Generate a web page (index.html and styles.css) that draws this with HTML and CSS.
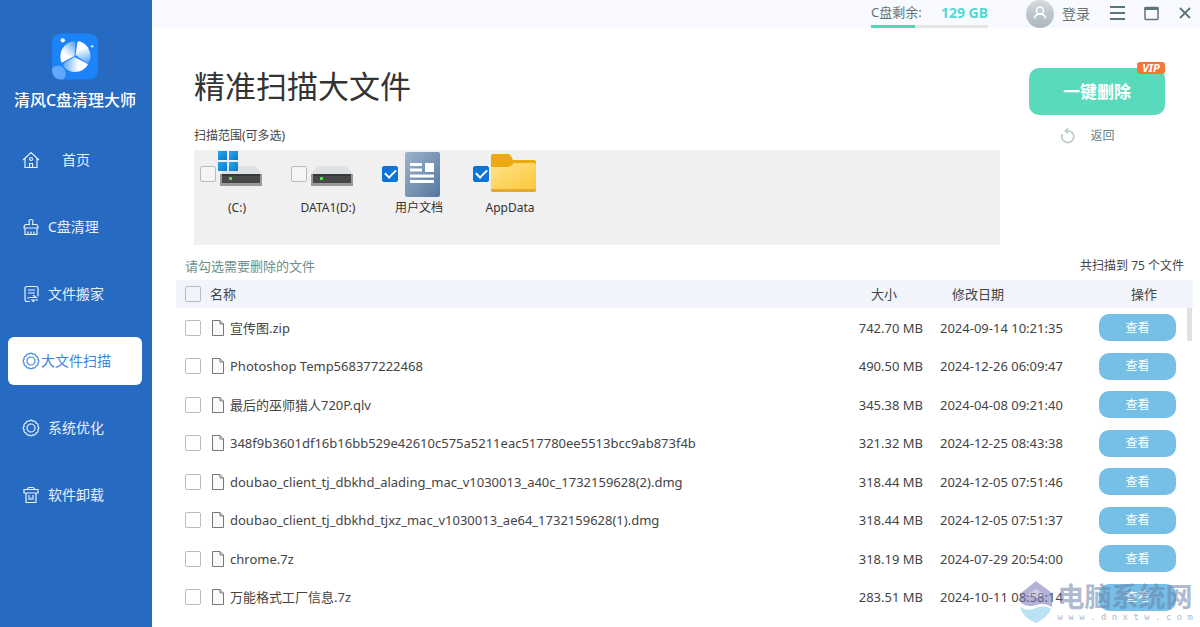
FILE: index.html
```html
<!DOCTYPE html>
<html lang="zh-CN">
<head>
<meta charset="utf-8">
<title>清风C盘清理大师</title>
<link rel="stylesheet" href="styles.css">
</head>
<body>
<svg class="defs" width="0" height="0" aria-hidden="true">
  <defs>
    <linearGradient id="blade" gradientUnits="userSpaceOnUse" x1="10" y1="26" x2="24" y2="10"><stop offset="0.3" stop-color="#fff"/><stop offset="1" stop-color="#5ba6fb"/></linearGradient>
    <linearGradient id="blade2" gradientUnits="userSpaceOnUse" x1="28" y1="9" x2="35" y2="30"><stop offset="0.3" stop-color="#fff"/><stop offset="1" stop-color="#5ba6fb"/></linearGradient>
    <linearGradient id="blade3" gradientUnits="userSpaceOnUse" x1="34" y1="33" x2="11" y2="31"><stop offset="0.3" stop-color="#fff"/><stop offset="1" stop-color="#5ba6fb"/></linearGradient>
    <linearGradient id="avatar" x1="0" y1="0" x2="0" y2="1"><stop offset="0" stop-color="#d5dadd"/><stop offset="1" stop-color="#aab6be"/></linearGradient>
    <linearGradient id="win" x1="0" y1="0" x2="1" y2="1"><stop offset="0" stop-color="#28a8ea"/><stop offset="1" stop-color="#0a78d0"/></linearGradient>
    <linearGradient id="doc" x1="0" y1="0" x2="1" y2="1"><stop offset="0" stop-color="#9db4cb"/><stop offset="1" stop-color="#55779e"/></linearGradient>
    <linearGradient id="folder" x1="0" y1="0" x2="1" y2="1"><stop offset="0" stop-color="#ffe38a"/><stop offset="1" stop-color="#fbc637"/></linearGradient>
    <symbol id="gear" viewBox="0 0 18 18">
      <path d="M7.200 2.200Q9 .2 10.800 2.200Q13.400 1.400 14 4.100Q16.700 4.700 15.900 7.300Q17.800 9 15.900 10.800Q16.700 13.400 14 14Q13.400 16.700 10.800 15.900Q9 17.800 7.200 15.900Q4.600 16.700 4 14Q1.300 13.400 2.100 10.800Q.2 9 2.100 7.300Q1.300 4.700 4 4.100Q4.600 1.400 7.200 2.200z"/>
      <circle cx="9" cy="9" r="4"/>
    </symbol>
    <symbol id="file" viewBox="0 0 12 16"><path d="M.5.500h7.500l3.500 3.500v11.500H.5z" fill="#fafafa" stroke="#777"/><path d="M8 .5V4h3.500" fill="none" stroke="#777"/></symbol>
    <symbol id="drive" viewBox="0 0 42 20">
      <path d="M7 0h28l7 8H0z" fill="#dfe2e4"/>
      <rect y="8" width="42" height="12" fill="#999"/><rect x="2" y="8" width="38" height="9" fill="#484848"/><rect x="2" y="8" width="38" height="2" fill="#383838"/>
      <rect x="9" y="11" width="3" height="3" fill="#4fe04f"/>
    </symbol>
  </defs>
</svg>
<div class="app">
  <aside class="sidebar">
    <div class="brand">
      <svg width="46" height="47" viewBox="0 0 47 47" aria-hidden="true">
        <defs><clipPath id="logo-clip"><rect width="47" height="47" rx="9"/></clipPath></defs>
        <rect width="47" height="47" rx="9" fill="#1c84f8"/>
        <circle cx="6" cy="41" r="8" fill="#60a9fb" clip-path="url(#logo-clip)"/>
        <path d="M23 23L10 30A15.500 15.500 0 0 1 22 8q2 0 2 2z" fill="url(#blade)"/>
        <path d="M24 22L26 9q0-1 2-1A15.500 15.500 0 0 1 38 29q-1 2-3 1z" fill="url(#blade2)"/>
        <path d="M23 24L36 31q1 1 0 2A15.500 15.500 0 0 1 12 34q-1-3 1-4z" fill="url(#blade3)"/>
        <circle cx="11" cy="7" r="2.200" fill="#fff"/><circle cx="41" cy="13" r="1.300" fill="#d5e9ff"/>
      </svg>
      <span class="brand-name">清风C盘清理大师</span>
    </div>
    <nav class="nav">
      <a class="nav-item nav-home" href="#"><svg class="nav-icon" viewBox="0 0 18 18"><path d="M1 9L9 1.500 17 9M3 7.500V16.500h12V7.500M7.500 16.500v-4h3v4"/><circle cx="9" cy="8" r="1.500"/></svg><span>首页</span></a>
      <a class="nav-item" href="#"><svg class="nav-icon" viewBox="0 0 18 18"><path d="M7.500 6.500L7 3.500q0-2 2-2t2 2l-.5 3h3.500q2 0 2 3.500H2q0-3.500 2-3.500zM3 10v6.500h12V10M6 16.500v-3M9 16.500v-3M12 16.500v-3"/></svg><span>C盘清理</span></a>
      <a class="nav-item" href="#"><svg class="nav-icon" viewBox="0 0 18 18"><path d="M8 16.500H5q-2 0-2-2v-11q0-2 2-2h9q2 0 2 2v8M6 5h7M6 8h7M5 13h2M7 12.500h7l-3-2.500M16 15h-6l2 2"/></svg><span>文件搬家</span></a>
      <a class="nav-item active" href="#" aria-current="page"><svg class="nav-icon"><use href="#gear"/></svg><span>大文件扫描</span></a>
      <a class="nav-item" href="#"><svg class="nav-icon"><use href="#gear"/></svg><span>系统优化</span></a>
      <a class="nav-item" href="#"><svg class="nav-icon" viewBox="0 0 18 18"><path d="M5.500 3.500q0-2 2-2h3q2 0 2 2M2 3.500h14V7H2zM4 7v9.500h10V7M7 9v5M9 11.500v2.500M11 9v5"/></svg><span>软件卸载</span></a>
    </nav>
  </aside>

  <main class="main">
    <header class="topbar">
      <div class="disk">
        <div class="disk-text"><span>C盘剩余:</span><strong>129 GB</strong></div>
        <div class="disk-track"><div class="disk-fill"></div></div>
      </div>
      <button class="login" type="button">
        <svg width="28" height="28" viewBox="0 0 28 28" aria-hidden="true"><circle cx="14" cy="14" r="14" fill="url(#avatar)"/><g fill="none" stroke="#fff" stroke-width="1.500"><circle cx="14" cy="10.500" r="3.500"/><path d="M8.500 18.500c.5-6 10.500-6 11 0"/></g></svg>
        <span>登录</span>
      </button>
      <div class="window-tools">
        <button class="tool" type="button" aria-label="菜单"><svg width="16" height="16" viewBox="0 0 16 16"><path d="M1 1h15M1 7h15M1 13h15" stroke-width="2"/></svg></button>
        <button class="tool" type="button" aria-label="最大化"><svg width="16" height="16" viewBox="0 0 16 16"><rect x="2" y="1.500" width="13" height="12" rx="1"/><path d="M1.500 2.500h14" stroke-width="3"/></svg></button>
        <button class="tool" type="button" aria-label="关闭"><svg width="16" height="16" viewBox="0 0 16 16"><path d="M3 2l10 10M13 2L3 12" stroke-width="1.800"/></svg></button>
      </div>
    </header>

    <section class="intro">
      <div class="scope">
        <h1>精准扫描大文件</h1>
        <p class="scope-label">扫描范围(可多选)</p>
        <div class="scope-panel">
          <label class="place">
            <span class="place-top"><input class="check" type="checkbox">
              <svg width="48" height="46" viewBox="0 0 48 46"><use href="#drive" x="2" y="15" width="42" height="20"/><g fill="url(#win)"><rect width="9" height="9"/><rect x="11" width="9" height="9"/><rect y="11" width="9" height="9"/><rect x="11" y="11" width="9" height="9"/></g></svg></span>
            <span>(C:)</span>
          </label>
          <label class="place">
            <span class="place-top"><input class="check" type="checkbox">
              <svg width="48" height="46" viewBox="0 0 48 46"><use href="#drive" x="2" y="15" width="42" height="20"/></svg></span>
            <span>DATA1(D:)</span>
          </label>
          <label class="place">
            <span class="place-top"><input class="check" type="checkbox" checked>
              <svg width="48" height="46" viewBox="0 0 48 46"><rect x="5" y="1" width="35" height="45" rx="2" fill="url(#doc)"/><path d="M10 13.500h12M10 19h12M10 25h24M10 30.500h24" stroke="#fff" stroke-width="3"/><rect x="25" y="12" width="9" height="9" fill="#fff"/></svg></span>
            <span>用户文档</span>
          </label>
          <label class="place">
            <span class="place-top"><input class="check" type="checkbox" checked>
              <svg width="48" height="46" viewBox="0 0 48 46"><path d="M0 5q0-2 2-2h15q2 0 3 2l2 4h21q2 0 2 2v10H0z" fill="#eda911"/><path d="M0 16h17q2 0 4-2l2-2h20q2 0 2 2v25q0 2-2 2H2q-2 0-2-2z" fill="url(#folder)"/><path d="M0 38h45v1q0 2-2 2H2q-2 0-2-2z" fill="#e2a92c"/></svg></span>
            <span>AppData</span>
          </label>
        </div>
      </div>
      <div class="actions">
        <button class="delete" type="button">一键删除<span class="vip">VIP</span></button>
        <button class="back" type="button"><svg width="16" height="16" viewBox="0 0 16 16" aria-hidden="true"><path d="M8 .5L5.500 3 8 5.500M5.500 3H9A6 5.800 0 1 1 2.500 6" fill="none" stroke="#b9cdc9" stroke-width="1.700"/></svg><span>返回</span></button>
      </div>
    </section>

    <section class="files">
      <div class="files-head"><span class="hint">请勾选需要删除的文件</span><span class="total">共扫描到 75 个文件</span></div>
      <div class="table-wrap">
        <table class="table">
          <thead><tr><th class="col-check"><input class="check" type="checkbox" aria-label="全选"></th><th class="col-name">名称</th><th class="col-size">大小</th><th class="col-date">修改日期</th><th class="col-action">操作</th></tr></thead>
          <tbody>
            <tr><td><input class="check" type="checkbox" id="f1"></td><td><label class="file" for="f1"><svg><use href="#file"/></svg>宣传图.zip</label></td><td class="size">742.70 MB</td><td>2024-09-14 10:21:35</td><td><button class="view" type="button">查看</button></td></tr>
            <tr><td><input class="check" type="checkbox" id="f2"></td><td><label class="file" for="f2"><svg><use href="#file"/></svg>Photoshop Temp568377222468</label></td><td class="size">490.50 MB</td><td>2024-12-26 06:09:47</td><td><button class="view" type="button">查看</button></td></tr>
            <tr><td><input class="check" type="checkbox" id="f3"></td><td><label class="file" for="f3"><svg><use href="#file"/></svg>最后的巫师猎人720P.qlv</label></td><td class="size">345.38 MB</td><td>2024-04-08 09:21:40</td><td><button class="view" type="button">查看</button></td></tr>
            <tr><td><input class="check" type="checkbox" id="f4"></td><td><label class="file" for="f4"><svg><use href="#file"/></svg>348f9b3601df16b16bb529e42610c575a5211eac517780ee5513bcc9ab873f4b</label></td><td class="size">321.32 MB</td><td>2024-12-25 08:43:38</td><td><button class="view" type="button">查看</button></td></tr>
            <tr><td><input class="check" type="checkbox" id="f5"></td><td><label class="file" for="f5"><svg><use href="#file"/></svg>doubao_client_tj_dbkhd_alading_mac_v1030013_a40c_1732159628(2).dmg</label></td><td class="size">318.44 MB</td><td>2024-12-05 07:51:46</td><td><button class="view" type="button">查看</button></td></tr>
            <tr><td><input class="check" type="checkbox" id="f6"></td><td><label class="file" for="f6"><svg><use href="#file"/></svg>doubao_client_tj_dbkhd_tjxz_mac_v1030013_ae64_1732159628(1).dmg</label></td><td class="size">318.44 MB</td><td>2024-12-05 07:51:37</td><td><button class="view" type="button">查看</button></td></tr>
            <tr><td><input class="check" type="checkbox" id="f7"></td><td><label class="file" for="f7"><svg><use href="#file"/></svg>chrome.7z</label></td><td class="size">318.19 MB</td><td>2024-07-29 20:54:00</td><td><button class="view" type="button">查看</button></td></tr>
            <tr><td><input class="check" type="checkbox" id="f8"></td><td><label class="file" for="f8"><svg><use href="#file"/></svg>万能格式工厂信息.7z</label></td><td class="size">283.51 MB</td><td>2024-10-11 08:58:14</td><td><button class="view" type="button">查看</button></td></tr>
          </tbody>
        </table>
        <div class="thumb"></div>
      </div>
    </section>
    <div class="watermark">
      <svg width="32" height="42" viewBox="0 0 32 42" aria-hidden="true"><path d="M16 0L32 12v14q-8-5-16-2T1 22V12z" fill="#7672b4"/><path d="M7 14l9-6 9 6-9 3z" fill="#a9a6d4"/><path d="M0 26q8 5 16 1t15 1q-3 8-15 14Q3 37 0 26z" fill="#82cbe8"/></svg>
      <div class="mark-text"><span class="mark-name">电脑系统网</span><span class="mark-url">w w w . d n x t w . c o m</span></div>
    </div>
  </main>
</div>
</body>
</html>
```
FILE: styles.css
```css
* { box-sizing: border-box; }
body {
  margin: 0;
  font: 13px/20px "Noto Sans", "Noto Sans CJK SC", sans-serif;
  color: #444;
  background: #fff;
}
button { font: inherit; color: inherit; border: 0; background: none; padding: 0; cursor: pointer; }
svg { display: block; flex: none; }
.defs { position: absolute; }
.app { display: flex; height: 100vh; overflow: hidden; }

.sidebar { flex: none; width: 152px; background: #276ac2; color: #fff; }
.brand { display: flex; flex-direction: column; align-items: center; gap: 10px; padding: 33px 2px 0 0; }
.brand-name { font-size: 16px; font-weight: 500; line-height: 20px; white-space: nowrap; }
.nav { display: flex; flex-direction: column; gap: 19px; padding: 26px 10px 0 8px; }
.nav-item {
  display: flex; align-items: center; gap: 8px;
  height: 48px; padding-left: 14px; border-radius: 6px;
  color: #e6f0ff; font-size: 14px; text-decoration: none; white-space: nowrap;
}
.nav-home { gap: 22px; }
.nav-icon { width: 18px; height: 18px; fill: none; stroke: currentColor; stroke-width: 1.2; }
.nav-item.active { gap: 1px; background: #fff; color: #3b86e0; }

.main { flex: 1; min-width: 0; position: relative; }
.topbar { display: flex; justify-content: flex-end; height: 28px; background: #f8faff; color: #5d7478; }
.disk { width: 117px; }
.disk-text { display: flex; justify-content: space-between; height: 25px; line-height: 25px; }
.disk-text strong { color: #55d8d5; font-size: 14px; font-weight: 700; }
.disk-track { height: 3px; background: #e4e6e6; }
.disk-fill { width: 38%; height: 3px; background: #56d6b0; }
.login { display: flex; align-items: center; gap: 8px; margin-left: 38px; font-size: 14px; }
.window-tools { display: flex; align-items: center; gap: 18px; margin: 0 7px 0 19px; }
.tool svg { fill: none; stroke: #5d7478; stroke-width: 1.5; }

.intro { display: flex; gap: 29px; padding: 40px 35px 0 42px; }
.scope { flex: 1; min-width: 0; }
h1 { margin: 0; font-size: 31px; font-weight: 400; line-height: 36px; color: #333; }
.scope-label { margin: 22px 0 5px; font-size: 12px; line-height: 19px; }
.scope-panel { display: flex; gap: 17px; height: 95px; padding: 1px 6px; background: #f0f0f0; }
.place { display: flex; flex-direction: column; align-items: center; width: 74px; font-size: 12px; line-height: 22px; color: #333; }
.place-top { display: flex; align-items: center; align-self: flex-start; gap: 2px; }

.check {
  appearance: none; display: block; flex: none;
  width: 16px; height: 16px; margin: 0;
  border: 1px solid #bbb; border-radius: 2px; background: #fff;
}
.scope-panel .check { background: #f5f5f5; }
.scope-panel .check:checked { display: grid; place-items: center; border-color: #0b74d4; background: #0b74d4; }
.check:checked::before {
  content: ""; width: 9px; height: 5px; margin-bottom: 3px;
  border: solid #fff; border-width: 0 0 2px 2px; transform: rotate(-45deg);
}

.actions { display: flex; flex-direction: column; align-items: center; gap: 11px; width: 136px; }
.delete {
  position: relative; width: 100%; height: 47px; border-radius: 10px;
  background: #5adabc; color: #fff; font-size: 17px; font-weight: 700;
}
.vip {
  position: absolute; top: -6px; right: 0; width: 28px; height: 12px; border-radius: 3px;
  background: #fb7435; font-size: 11px; font-style: italic; line-height: 12px; text-align: center;
}
.back { display: flex; align-items: center; gap: 14px; margin-right: 24px; padding-left: 5px; font-size: 12px; color: #667f85; }

.files { padding: 11px 7px 0 24px; }
.files-head { display: flex; justify-content: space-between; padding: 0 9px 4px; }
.hint { font-size: 13px; color: #6b8f8b; }
.total { font-size: 12px; }
.table-wrap { position: relative; }
.table { width: 100%; table-layout: fixed; border-collapse: collapse; white-space: nowrap; }
th, td { padding: 0; text-align: left; font-weight: 400; }
th { height: 28px; background: #f1f5fb; }
th .check { background: transparent; }
td { height: 39px; }
tr:nth-child(even) td { height: 38px; }
th:first-child, td:first-child { padding-left: 9px; }
.col-check { width: 34px; }
.col-size { width: 88px; padding-right: 26px; text-align: right; }
.col-date { width: 176px; padding-left: 29px; }
.col-action { width: 94px; padding-left: 32px; }
.size { text-align: right; }
.size + td { padding-left: 17px; }
.file { display: flex; align-items: center; gap: 6px; padding-left: 2px; }
.file svg { width: 12px; height: 16px; }
.view { display: block; width: 77px; height: 27px; border-radius: 10px; background: #76bfe7; color: #fff; font-size: 12px; }
.thumb { position: absolute; top: 28px; right: 1px; width: 5px; height: 33px; background: #e1e1e1; }

.watermark { position: absolute; right: 7px; bottom: 4px; display: flex; align-items: center; gap: 6px; opacity: 0.55; pointer-events: none; }
.mark-text { display: flex; flex-direction: column; color: #6c82a8; white-space: nowrap; }
.mark-name { font-size: 27px; font-weight: 700; line-height: 30px; }
.mark-url { font: 9px/10px "DejaVu Sans Mono", monospace; }
```
